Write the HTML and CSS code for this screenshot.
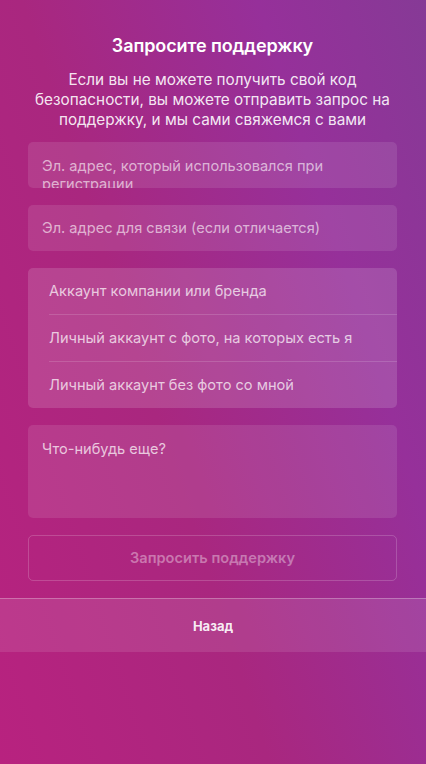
FILE: index.html
```html
<!DOCTYPE html>
<html lang="ru">
<head>
<meta charset="utf-8">
<link rel="stylesheet" href="styles.css">
</head>
<body>
<div class="page">
  <div class="content">
    <h1 class="title">Запросите поддержку</h1>
    <p class="lead">Если вы не можете получить свой код безопасности, вы можете отправить запрос на поддержку, и мы сами свяжемся с вами</p>
    <div class="field field-clip"><span>Эл. адрес, который использовался при регистрации</span></div>
    <div class="field"><span>Эл. адрес для связи (если отличается)</span></div>
    <div class="options">
      <div class="option">Аккаунт компании или бренда</div>
      <div class="option">Личный аккаунт с фото, на которых есть я</div>
      <div class="option">Личный аккаунт без фото со мной</div>
    </div>
    <div class="textarea">Что-нибудь еще?</div>
    <div class="submit">Запросить поддержку</div>
  </div>
  <div class="back">Назад</div>
</div>
</body>
</html>
```
FILE: styles.css
```css
html, body {
  margin: 0;
  padding: 0;
}
body {
  width: 426px;
  height: 764px;
  overflow: hidden;
  font-family: Inter, "Noto Sans", sans-serif;
  color: #fff;
  background: linear-gradient(72deg, #b8227f 0%, #a9277f 40%, #96309a 75%, #863a96 100%);
}
.page {
  display: flex;
  flex-direction: column;
  height: 764px;
}
.content {
  padding: 0 29px 0 28px;
  display: flex;
  flex-direction: column;
}
.title {
  margin: 35px 0 0;
  font-size: 18px;
  font-weight: 600;
  text-align: center;
  line-height: 22px;
  letter-spacing: -0.1px;
}
.lead {
  margin: 13px -6px 0;
  font-size: 15.3px;
  line-height: 20px;
  text-align: center;
  color: rgba(255,255,255,0.9);
}
.field {
  margin-top: 17px;
  height: 46px;
  border-radius: 5px;
  background: rgba(255,255,255,0.1);
  padding: 0 14px;
  display: flex;
  align-items: center;
  font-size: 14.6px;
  line-height: 18px;
  color: rgba(255,255,255,0.62);
  overflow: hidden;
  box-sizing: border-box;
}
.field-clip {
  margin-top: 12px;
  align-items: flex-start;
  padding-top: 15px;
}
.field-clip span {
  display: block;
  padding-right: 40px;
}
.options {
  margin-top: 17px;
  border-radius: 5px;
  background: rgba(255,255,255,0.14);
  padding-left: 21px;
  display: flex;
  flex-direction: column;
}
.option {
  height: 47px;
  display: flex;
  align-items: center;
  font-size: 14.6px;
  color: rgba(255,255,255,0.72);
  border-bottom: 1px solid rgba(255,255,255,0.15);
  box-sizing: border-box;
}
.option:last-child {
  border-bottom: none;
  height: 46px;
}
.textarea {
  margin-top: 17px;
  height: 93px;
  border-radius: 5px;
  background: rgba(255,255,255,0.1);
  padding: 15px 14px 0;
  box-sizing: border-box;
  font-size: 14.6px;
  line-height: 18px;
  color: rgba(255,255,255,0.72);
}
.submit {
  margin-top: 17px;
  height: 46px;
  border-radius: 5px;
  border: 1px solid rgba(255,255,255,0.18);
  box-sizing: border-box;
  display: flex;
  align-items: center;
  justify-content: center;
  font-size: 14.6px;
  font-weight: 600;
  color: rgba(255,255,255,0.38);
}
.back {
  margin-top: 17px;
  height: 54px;
  border-top: 1px solid rgba(255,255,255,0.28);
  background: rgba(255,255,255,0.1);
  display: flex;
  align-items: center;
  justify-content: center;
  font-size: 13px;
  font-weight: 700;
  color: rgba(255,255,255,0.92);
  box-sizing: border-box;
}
```
